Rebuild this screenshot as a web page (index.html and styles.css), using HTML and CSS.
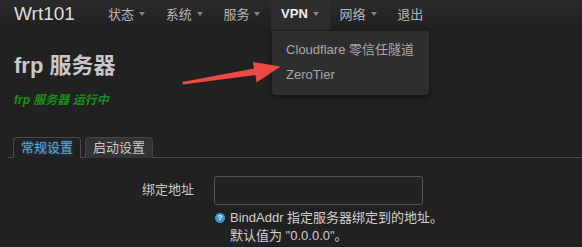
FILE: index.html
```html
<!DOCTYPE html>
<html lang="zh-CN">
<head>
<meta charset="utf-8">
<title>frp 服务器</title>
<link rel="stylesheet" href="styles.css">
</head>
<body>
<header class="navbar">
  <a class="brand" href="#">Wrt101</a>
  <ul class="nav">
    <li class="nav-item"><span>状态</span><i class="caret"></i></li>
    <li class="nav-item"><span>系统</span><i class="caret"></i></li>
    <li class="nav-item"><span>服务</span><i class="caret"></i></li>
    <li class="nav-item active"><span>VPN</span><i class="caret"></i>
      <ul class="dropdown">
        <li>Cloudflare 零信任隧道</li>
        <li>ZeroTier</li>
      </ul>
    </li>
    <li class="nav-item"><span>网络</span><i class="caret"></i></li>
    <li class="nav-item"><span>退出</span></li>
  </ul>
</header>
<main class="content">
  <h2 class="title">frp 服务器</h2>
  <div class="status">frp 服务器 运行中</div>
  <ul class="tabs">
    <li class="tab active">常规设置</li>
    <li class="tab">启动设置</li>
  </ul>
  <div class="field">
    <label class="field-label">绑定地址</label>
    <div class="field-value">
      <input class="text-input" type="text">
      <div class="help">
        <span class="help-icon">?</span>BindAddr 指定服务器绑定到的地址。<br>默认值为 "0.0.0.0"。
      </div>
    </div>
  </div>
</main>
<svg class="annot" width="582" height="247" viewBox="0 0 582 247">
  <polygon points="182,82 254,68.5 253,62 280.5,66.5 256.5,82.5 255.5,75 183,84.5" fill="#ec4b45"/>
</svg>
</body>
</html>
```

FILE: styles.css
```css
* { box-sizing: border-box; }
html, body {
  margin: 0;
  padding: 0;
  background: #212121;
  font-family: "Liberation Sans", "Noto Sans CJK SC", sans-serif;
  color: #ccc;
  font-size: 13px;
  overflow: hidden;
}
.navbar {
  height: 30px;
  display: flex;
  align-items: stretch;
  background: linear-gradient(#2a2a2a, #202020);
}
.brand {
  display: flex;
  align-items: center;
  padding-left: 14px;
  width: 98px;
  font-size: 19px;
  color: #ddd;
  text-decoration: none;
  padding-bottom: 3px;
}
.nav {
  display: flex;
  list-style: none;
  margin: 0;
  padding: 0;
}
.nav-item {
  position: relative;
  display: flex;
  align-items: center;
  gap: 5px;
  padding: 0 10px 4px;
  color: #b5b5b5;
  font-size: 13px;
}
.nav-item.active {
  background: #2d2d2d;
  color: #f0f0f0;
  font-weight: bold;
}
.caret {
  width: 0;
  height: 0;
  border-left: 3.5px solid transparent;
  border-right: 3.5px solid transparent;
  border-top: 4px solid #888;
  margin-top: 1px;
  margin-right: 0.7px;
}
.dropdown {
  position: absolute;
  top: 31px;
  left: 1px;
  width: 157px;
  margin: 0;
  padding: 6px 0 8px;
  list-style: none;
  background: #2e2e2e;
  border-radius: 0 0 4px 4px;
  box-shadow: 0 2px 5px rgba(0,0,0,0.5);
  font-weight: normal;
  z-index: 5;
}
.dropdown li {
  padding: 0 14px;
  line-height: 25px;
  color: #a8a8a8;
  font-size: 13px;
  white-space: nowrap;
}
.content {
  padding: 0 0 0 8px;
}
.title {
  margin: 21px 0 0 6px;
  font-size: 22px;
  line-height: 30px;
  font-weight: bold;
  color: #c8c8c8;
}
.status {
  margin: 10px 0 0 6px;
  line-height: 18px;
  font-size: 12px;
  font-weight: bold;
  font-style: italic;
  color: #179017;
}
.tabs {
  display: flex;
  gap: 4px;
  list-style: none;
  margin: 28px 0 0;
  padding: 0 0 0 5px;
  border-bottom: 1px solid #484848;
}
.tab {
  padding: 1px 7px 0;
  line-height: 18px;
  border: 1px solid #444;
  border-bottom: none;
  border-radius: 4px 4px 0 0;
  background: #333;
  color: #c8c8c8;
  margin-bottom: -1px;
}
.tab.active {
  background: #212121;
  border-color: #4a4a4a;
  color: #5ea6d6;
  text-shadow: 0 0 3px rgba(60,140,200,0.6);
  padding-bottom: 1px;
}
.field {
  display: grid;
  grid-template-columns: 180px 1fr;
  column-gap: 20px;
  margin-top: 18px;
  margin-left: 6px;
}
.field-label {
  text-align: right;
  padding-top: 5px;
  line-height: 18px;
  color: #c8c8c8;
}
.text-input {
  display: block;
  width: 209px;
  height: 29px;
  background: #222;
  border: 1px solid #555;
  border-radius: 3px;
  margin: 0;
}
.help {
  margin-top: 4px;
  padding-left: 16px;
  line-height: 18px;
  color: #cfcfcf;
  position: relative;
}
.help-icon {
  position: absolute;
  left: 1px;
  top: 4px;
  width: 10px;
  height: 10px;
  border-radius: 50%;
  background: #3d9bd3;
  color: #fff;
  font-size: 8px;
  line-height: 10px;
  text-align: center;
  font-weight: bold;
}
.annot {
  position: absolute;
  left: 0;
  top: 0;
  pointer-events: none;
  z-index: 10;
}
```
